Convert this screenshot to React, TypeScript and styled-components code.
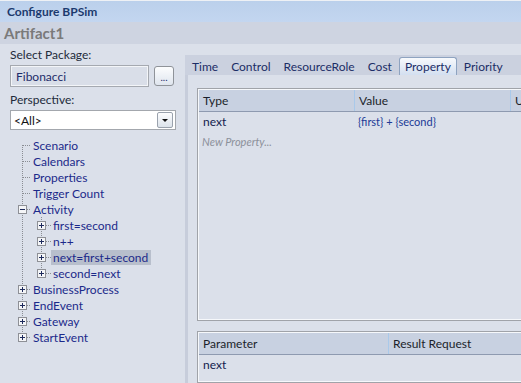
import React from 'react';
import styled, { createGlobalStyle } from 'styled-components';

const Global = createGlobalStyle`
  html, body { margin: 0; padding: 0; }
  body {
    width: 521px; height: 383px; overflow: hidden;
    background: #dbe0ea;
    font-family: Lato, "Noto Sans", sans-serif;
    font-size: 12px;
  }
`;

const Window = styled.div`
  width: 521px; height: 383px; overflow: hidden;
  display: flex; flex-direction: column;
  background: #dbe0ea;
`;

const TitleBar = styled.div`
  height: 21px; flex: none;
  border-top: 1px solid #eef1f5;
  background: linear-gradient(#bbd0eb, #c3d6f0);
  display: flex; align-items: center;
  padding-left: 7px;
  font-weight: bold; color: #1c3a6e; font-size: 12px;
`;

const SubTitle = styled.div`
  height: 22px; flex: none;
  background: #ced4e1;
  display: flex; align-items: center;
  padding-left: 4px;
  font-weight: bold; font-size: 15px; color: #7a7a7a;
`;

const Body = styled.div`
  flex: 1; min-height: 0;
  display: flex;
`;

const LeftPane = styled.div`
  width: 185px; flex: none;
  box-sizing: border-box;
  padding: 4px 0 0 10px;
  display: flex; flex-direction: column;
`;

const FieldLabel = styled.div<{ $gap?: number }>`
  height: 14px; line-height: 14px;
  margin-top: ${p => p.$gap ?? 0}px;
  color: #222a3a;
`;

const FieldRow = styled.div`
  display: flex; align-items: flex-start;
  margin-top: 3px;
`;

const TextBox = styled.div`
  width: 139px; height: 22px; box-sizing: border-box;
  border: 1px solid #a5a9b0;
  box-shadow: inset 0 0 0 1px #f3f5f8;
  background: #d9dee8;
  padding-left: 5px;
  display: flex; align-items: center;
  color: #1d2c6a;
`;

const DotsButton = styled.div`
  width: 20px; height: 20px; box-sizing: border-box;
  margin: 1px 0 0 5px;
  border: 1px solid #8f9399;
  border-radius: 3px;
  background: linear-gradient(#fcfdfe, #dfe5ee);
  display: flex; align-items: flex-end; justify-content: center;
  font-size: 10px; line-height: 10px; color: #1d2c6a;
  padding-bottom: 3px;
`;

const Select = styled.div`
  width: 166px; height: 20px; box-sizing: border-box;
  margin-top: 3px;
  border: 1px solid #a3a7ad;
  background: #ffffff;
  display: flex; align-items: center; justify-content: space-between;
  padding: 0 2px 0 3px;
  color: #111;
`;

const DropButton = styled.span`
  width: 16px; height: 16px; box-sizing: border-box;
  border: 1px solid #9aa2ad; border-radius: 2px;
  background: linear-gradient(#fdfdfe, #dce3eb);
  display: flex; align-items: center; justify-content: center;
  &::after {
    content: '';
    border-left: 3px solid transparent;
    border-right: 3px solid transparent;
    border-top: 3px solid #111;
  }
`;

const Tree = styled.div`
  margin-top: 7px;
  margin-left: 8px;
  display: flex; flex-direction: column;
`;

const TreeRow = styled.div`
  height: 16px;
  display: flex; align-items: center;
`;

const TreeLabel = styled.span<{ $selected?: boolean }>`
  height: 15px; line-height: 15px;
  padding: 0 3px 0 2px;
  color: #1c2a8a;
  background: ${p => (p.$selected ? '#b8bfcc' : 'transparent')};
  white-space: nowrap;
`;

const RightPane = styled.div`
  flex: 1; min-width: 0;
  display: flex; flex-direction: column;
  padding-top: 11px;
`;

const TabStrip = styled.div`
  height: 20px; flex: none;
  background: #cbd1df;
  display: flex; align-items: flex-end;
  padding-left: 1px;
`;

const Tab = styled.div<{ $active?: boolean }>`
  height: 18px; box-sizing: border-box;
  display: flex; align-items: center;
  padding: 0 5px;
  margin-right: 1px;
  color: #1b2d66;
  white-space: nowrap;
  border: 1px solid ${p => (p.$active ? '#8ea3c0' : 'transparent')};
  border-bottom: none;
  border-radius: 3px 3px 0 0;
  background: ${p => (p.$active ? 'linear-gradient(#f7f9fc, #d3dff0)' : 'transparent')};
`;

const TabPage = styled.div`
  flex: 1; min-height: 0;
  border-left: 3px solid #c7cddb;
  padding: 13px 0 0 9px;
  display: flex; flex-direction: column; gap: 10px;
`;

const Grid = styled.div<{ $height?: number }>`
  width: 400px; flex: ${p => (p.$height ? 'none' : '1')};
  height: ${p => (p.$height ? `${p.$height}px` : 'auto')};
  box-sizing: border-box;
  border: 1px solid #a0a3a9;
  padding: 1px;
  box-shadow: inset 0 0 0 1px #f6f8fb;
  display: flex; flex-direction: column;
`;

const HeaderRow = styled.div`
  height: 21px; flex: none;
  background: #c8d1e1;
  border-bottom: 1px solid #8e9ab0;
  display: flex;
`;

const HeaderCell = styled.div<{ $w?: number }>`
  width: ${p => (p.$w ? `${p.$w}px` : 'auto')};
  flex: ${p => (p.$w ? 'none' : '1')};
  box-sizing: border-box;
  border-right: 1px solid #a9c9ea;
  padding-left: 4px;
  display: flex; align-items: center;
  color: #1b1f2a;
`;

const DataRow = styled.div`
  height: 20px; flex: none;
  display: flex;
`;

const DataCell = styled.div<{ $w?: number; $small?: boolean; $muted?: boolean }>`
  width: ${p => (p.$w ? `${p.$w}px` : 'auto')};
  flex: ${p => (p.$w ? 'none' : '1')};
  box-sizing: border-box;
  padding-left: ${p => (p.$small ? 3 : 4)}px;
  padding-bottom: 1px;
  display: flex; align-items: center;
  font-size: ${p => (p.$small ? 11 : 12)}px;
  font-style: ${p => (p.$muted ? 'italic' : 'normal')};
  color: ${p => (p.$muted ? '#8c909a' : p.$small ? '#213a96' : '#131d4e')};
  white-space: nowrap;
`;

type Box = 'plus' | 'minus' | undefined;
type Pos = 'first' | 'mid' | 'last';

const Dotted = ({ x1, y1, x2, y2 }: { x1: number; y1: number; x2: number; y2: number }) => (
  <line x1={x1} y1={y1} x2={x2} y2={y2} stroke="#8a8d93" strokeWidth={1} strokeDasharray="1 1" shapeRendering="crispEdges" />
);

const PassCell = () => (
  <svg width={19} height={16} style={{ flex: 'none', display: 'block' }}>
    <Dotted x1={4.5} y1={0} x2={4.5} y2={16} />
  </svg>
);

const OwnCell = ({ box, pos, width }: { box: Box; pos: Pos; width: number }) => {
  const y1 = pos === 'first' ? 8 : 0;
  const y2 = pos === 'last' ? 9 : 16;
  return (
    <svg width={width} height={16} style={{ flex: 'none', display: 'block' }}>
      <Dotted x1={4.5} y1={y1} x2={4.5} y2={y2} />
      <Dotted x1={5} y1={8.5} x2={width} y2={8.5} />
      {box && (
        <g shapeRendering="crispEdges">
          <rect x={0.5} y={4.5} width={8} height={8} fill="#f4f5f7" stroke="#8e9096" />
          <line x1={2} y1={8.5} x2={7} y2={8.5} stroke="#1d2a5c" />
          {box === 'plus' && <line x1={4.5} y1={6} x2={4.5} y2={11} stroke="#1d2a5c" />}
        </g>
      )}
    </svg>
  );
};

interface Item { label: string; level: number; box?: Box; pos: Pos; selected?: boolean }

const items: Item[] = [
  { label: 'Scenario', level: 0, pos: 'first' },
  { label: 'Calendars', level: 0, pos: 'mid' },
  { label: 'Properties', level: 0, pos: 'mid' },
  { label: 'Trigger Count', level: 0, pos: 'mid' },
  { label: 'Activity', level: 0, box: 'minus', pos: 'mid' },
  { label: 'first=second', level: 1, box: 'plus', pos: 'mid' },
  { label: 'n++', level: 1, box: 'plus', pos: 'mid' },
  { label: 'next=first+second', level: 1, box: 'plus', pos: 'mid', selected: true },
  { label: 'second=next', level: 1, box: 'plus', pos: 'last' },
  { label: 'BusinessProcess', level: 0, box: 'plus', pos: 'mid' },
  { label: 'EndEvent', level: 0, box: 'plus', pos: 'mid' },
  { label: 'Gateway', level: 0, box: 'plus', pos: 'mid' },
  { label: 'StartEvent', level: 0, box: 'plus', pos: 'last' },
];

const tabs = ['Time', 'Control', 'ResourceRole', 'Cost', 'Property', 'Priority'];

export default function App() {
  return (
    <>
      <Global />
      <Window>
        <TitleBar>Configure BPSim</TitleBar>
        <SubTitle>Artifact1</SubTitle>
        <Body>
          <LeftPane>
            <FieldLabel>Select Package:</FieldLabel>
            <FieldRow>
              <TextBox>Fibonacci</TextBox>
              <DotsButton>...</DotsButton>
            </FieldRow>
            <FieldLabel $gap={6}>Perspective:</FieldLabel>
            <Select>
              <span>&lt;All&gt;</span>
              <DropButton />
            </Select>
            <Tree>
              {items.map(it => (
                <TreeRow key={it.label}>
                  {it.level > 0 && <PassCell />}
                  <OwnCell box={it.box} pos={it.pos} width={it.level > 0 ? 14 : 13} />
                  <TreeLabel $selected={it.selected}>{it.label}</TreeLabel>
                </TreeRow>
              ))}
            </Tree>
          </LeftPane>
          <RightPane>
            <TabStrip>
              {tabs.map(t => (
                <Tab key={t} $active={t === 'Property'}>{t}</Tab>
              ))}
            </TabStrip>
            <TabPage>
              <Grid $height={233}>
                <HeaderRow>
                  <HeaderCell $w={156}>Type</HeaderCell>
                  <HeaderCell $w={156}>Value</HeaderCell>
                  <HeaderCell>Unit</HeaderCell>
                </HeaderRow>
                <DataRow>
                  <DataCell $w={156}>next</DataCell>
                  <DataCell $w={156} $small>{'{first} + {second}'}</DataCell>
                  <DataCell />
                </DataRow>
                <DataRow>
                  <DataCell $w={156} $muted $small>New Property...</DataCell>
                </DataRow>
              </Grid>
              <Grid>
                <HeaderRow>
                  <HeaderCell $w={190}>Parameter</HeaderCell>
                  <HeaderCell>Result Request</HeaderCell>
                </HeaderRow>
                <DataRow>
                  <DataCell $w={190}>next</DataCell>
                  <DataCell />
                </DataRow>
              </Grid>
            </TabPage>
          </RightPane>
        </Body>
      </Window>
    </>
  );
}
